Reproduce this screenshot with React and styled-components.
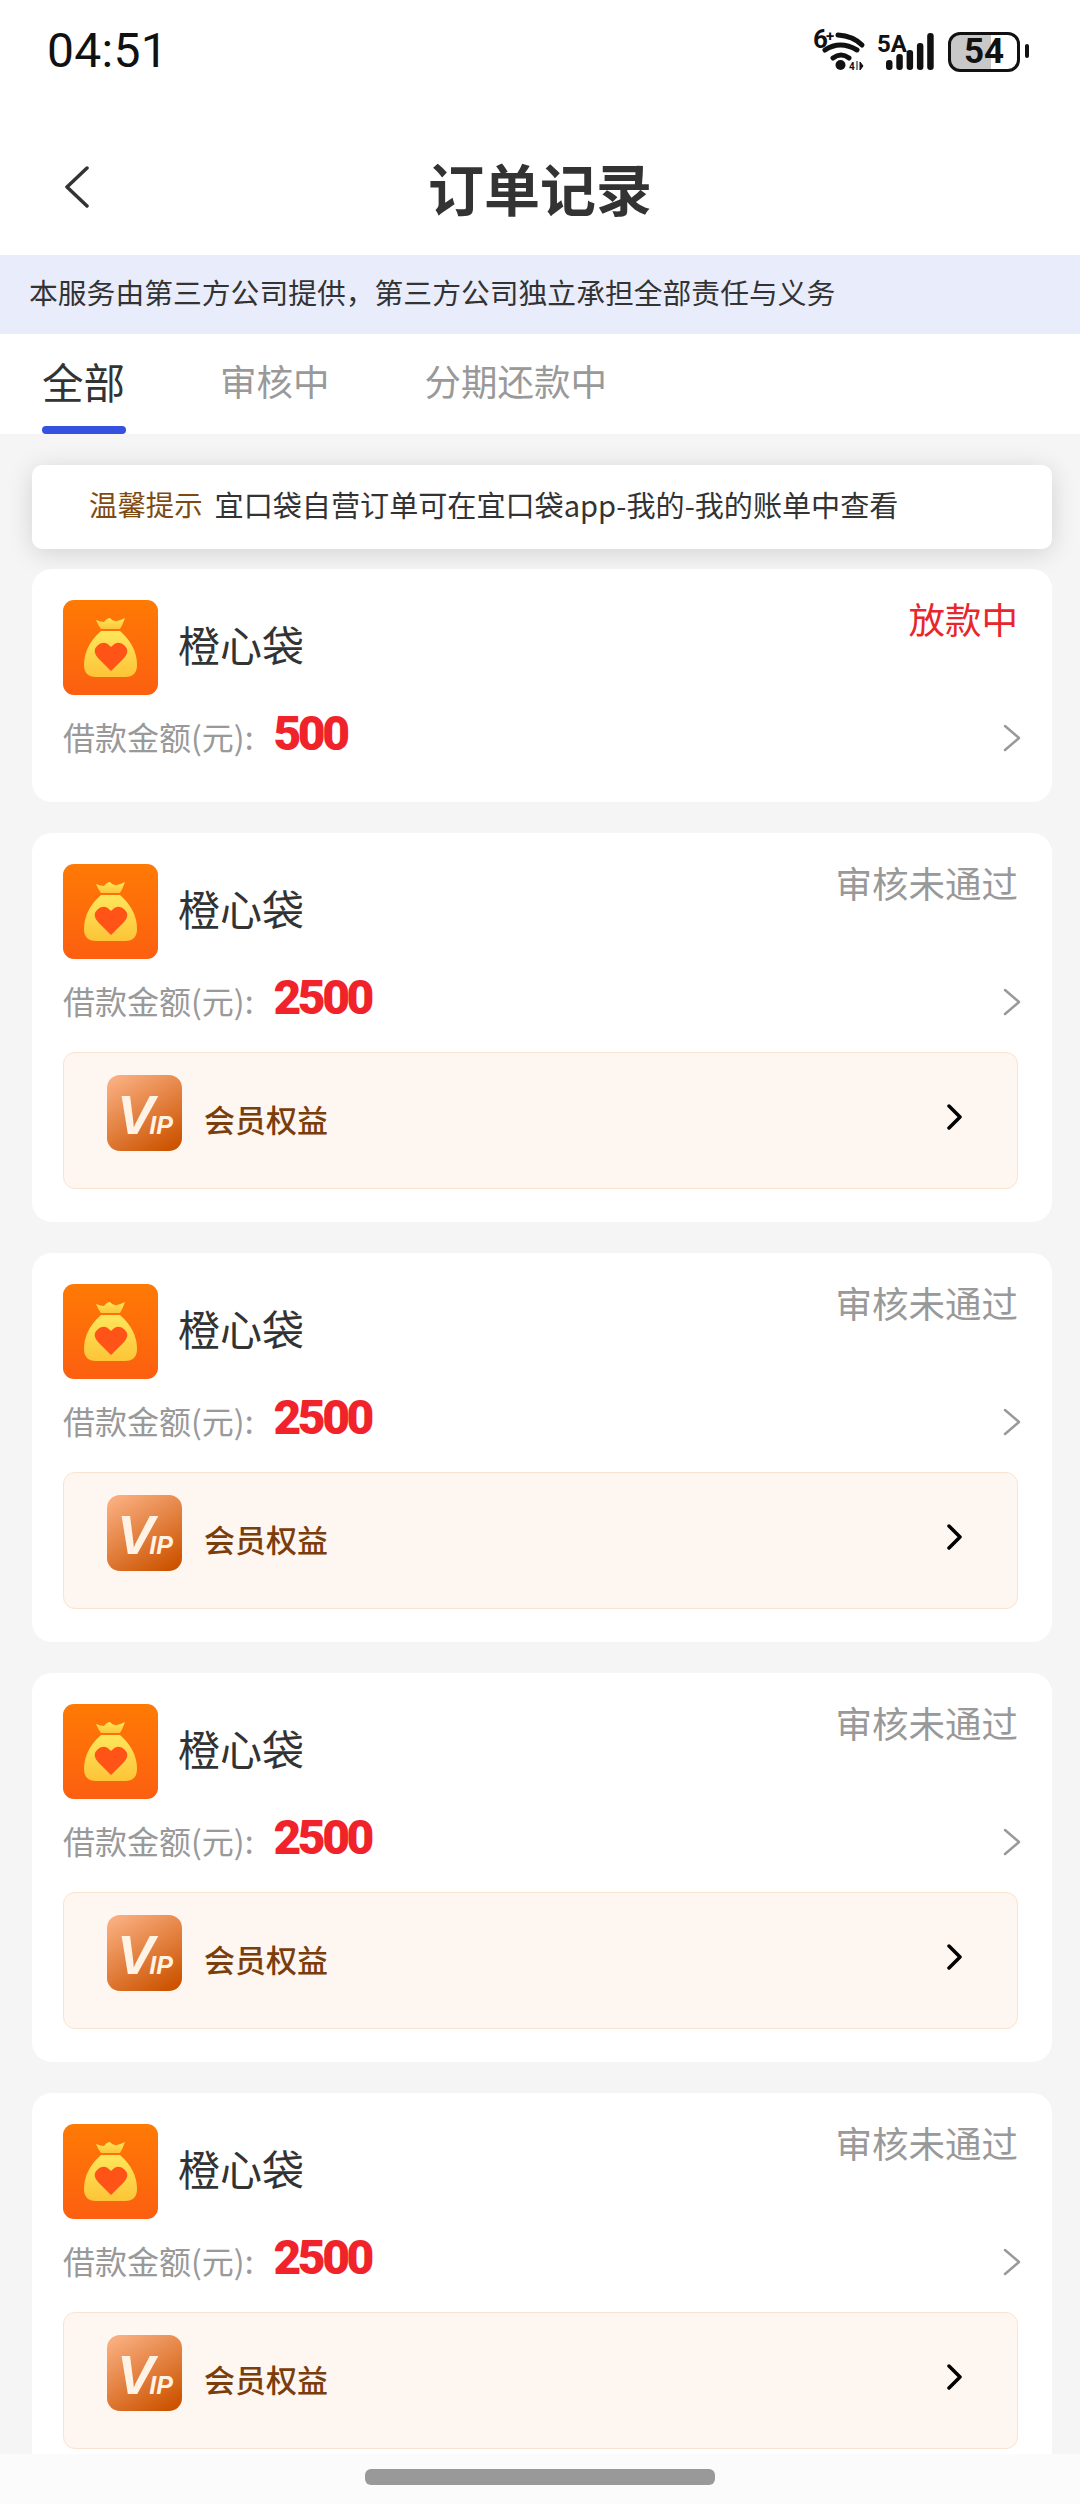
import styled, { createGlobalStyle } from 'styled-components';

const GlobalStyle = createGlobalStyle`
  html, body {
    margin: 0;
    padding: 0;
    background: #f5f5f5;
  }
  * {
    box-sizing: border-box;
  }
`;

const orders = [
  { id: 1, amount: '500', status: '放款中', active: true, vip: false },
  { id: 2, amount: '2500', status: '审核未通过', vip: true },
  { id: 3, amount: '2500', status: '审核未通过', vip: true },
  { id: 4, amount: '2500', status: '审核未通过', vip: true },
  { id: 5, amount: '2500', status: '审核未通过', vip: true },
];

function WifiIcon() {
  return (
    <StatusSvg width="55" height="50" viewBox="813 27 55 50">
      <StatusText x="813" y="48" fontSize="26">6</StatusText>
      <StatusText x="826" y="41" fontSize="15">+</StatusText>
      <g fill="none" stroke="#111" strokeWidth="5" strokeLinecap="round">
        <path d="M838 35 Q853 36 862 45" />
        <path d="M825 50 Q840 40 857 50" />
        <path d="M833 58 Q841 52 849 58" />
      </g>
      <circle cx="840.5" cy="65" r="5" fill="#111" />
      <StatusText x="849" y="70" fontSize="10">4</StatusText>
      <path d="M857 61v9M860 62l3 4h-3zM860 70l3-4h-3z" fill="#111" stroke="#111" strokeWidth="1" />
    </StatusSvg>
  );
}

function SignalIcon() {
  const bars = [60, 54, 50, 43, 33];
  return (
    <StatusSvg width="60" height="50" viewBox="878 27 60 50">
      <StatusText x="877" y="52" fontSize="24">5A</StatusText>
      {bars.map((top, i) => (
        <rect key={top} x={886 + i * 10.3} y={top} width="6.5" height={70 - top} rx="3" fill="#111" />
      ))}
    </StatusSvg>
  );
}

function BackIcon() {
  return (
    <svg width="25" height="42" viewBox="0 0 25 42" fill="none" stroke="#333" strokeWidth="3.5" strokeLinecap="round" strokeLinejoin="round">
      <path d="M23 2 L3 21 L23 40" />
    </svg>
  );
}

function BagLogo() {
  return (
    <LogoSvg viewBox="0 0 95 95">
      <defs>
        <linearGradient id="logoBg" x1="0" y1="0" x2="0" y2="1">
          <stop offset="0" stopColor="#ff7a05" />
          <stop offset="1" stopColor="#fc5f10" />
        </linearGradient>
        <linearGradient id="logoBag" x1="0" y1="0" x2="0" y2="1">
          <stop offset="0" stopColor="#ffe65c" />
          <stop offset="1" stopColor="#fdc437" />
        </linearGradient>
      </defs>
      <rect width="95" height="95" rx="11" fill="url(#logoBg)" />
      <path d="M33 20 Q38 22 41 22 Q44 18 47 18 Q50 22 54 21 Q58 20 62 18 Q60 24 57 29 L38 29 Q35 25 33 20 Z" fill="url(#logoBag)" />
      <path d="M38 31 L57 31 Q74 46 74 65 Q74 77 62 77 L33 77 Q21 77 21 65 Q21 46 38 31 Z" fill="url(#logoBag)" />
      <path d="M48 71 L35 58 Q29 51 34 46 Q41 39 48 47 Q55 39 62 46 Q67 51 61 58 Z" fill="#ff5317" />
    </LogoSvg>
  );
}

function VipBadge() {
  return (
    <BadgeSvg viewBox="0 0 75 76">
      <defs>
        <linearGradient id="vipBg" x1="0.2" y1="0" x2="0.8" y2="1">
          <stop offset="0" stopColor="#f9ad7e" />
          <stop offset="1" stopColor="#cc5300" />
        </linearGradient>
      </defs>
      <rect width="75" height="76" rx="13" fill="url(#vipBg)" />
      <BadgeText x="10" y="59" fontSize="56">
        V<tspan fontSize="25" dx="-5">IP</tspan>
      </BadgeText>
    </BadgeSvg>
  );
}

function OrderCard({ amount, status, active, vip }) {
  return (
    <Card>
      <CardHead>
        <Brand>
          <BagLogo />
          <BrandName>橙心袋</BrandName>
        </Brand>
        <Status $active={active}>{status}</Status>
      </CardHead>
      <AmountRow>
        <AmountLabel>借款金额(元):</AmountLabel>
        <Amount>{amount}</Amount>
        <RowArrow width="18" height="28" viewBox="0 0 18 28">
          <path d="M2 2 L16 14 L2 26" />
        </RowArrow>
      </AmountRow>
      {vip && (
        <VipBox>
          <VipBadge />
          <VipLabel>会员权益</VipLabel>
          <VipArrow width="16" height="26" viewBox="0 0 16 26">
            <path d="M2 2 L13 13 L2 24" />
          </VipArrow>
        </VipBox>
      )}
    </Card>
  );
}

export default function App() {
  return (
    <Page>
      <GlobalStyle />
      <StatusBar>
        <Time>04:51</Time>
        <StatusIcons>
          <WifiIcon />
          <SignalIcon />
          <Battery>54</Battery>
        </StatusIcons>
      </StatusBar>
      <NavBar>
        <BackIcon />
        <Title>订单记录</Title>
      </NavBar>
      <Notice>本服务由第三方公司提供，第三方公司独立承担全部责任与义务</Notice>
      <Tabs>
        <Tab $active>全部</Tab>
        <Tab>审核中</Tab>
        <Tab>分期还款中</Tab>
      </Tabs>
      <List>
        <Tip>
          <TipLabel>温馨提示</TipLabel>
          <TipText>宜口袋自营订单可在宜口袋app-我的-我的账单中查看</TipText>
        </Tip>
        <Cards>
          {orders.map((order) => (
            <OrderCard key={order.id} {...order} />
          ))}
        </Cards>
      </List>
      <HomeBar>
        <HomePill />
      </HomeBar>
    </Page>
  );
}

const Page = styled.div`
  position: relative;
  width: 1080px;
  height: 2504px;
  overflow: hidden;
  background: #f5f5f5;
  font-family: 'Noto Sans CJK SC', 'Noto Sans', sans-serif;
`;

const StatusBar = styled.div`
  display: flex;
  justify-content: space-between;
  align-items: center;
  height: 104px;
  padding: 0 52px 0 47px;
  background: #fff;
`;

const Time = styled.div`
  font-family: Roboto, sans-serif;
  font-size: 48px;
  font-weight: 450;
  color: #111;
  letter-spacing: 0.3px;
  margin-top: -4px;
`;

const StatusIcons = styled.div`
  display: flex;
  align-items: center;
  gap: 10px;
`;

const StatusSvg = styled.svg`
  display: block;
  overflow: visible;
`;

const StatusText = styled.text`
  font-family: Roboto, sans-serif;
  font-weight: 700;
  fill: #111;
`;

const Battery = styled.div`
  position: relative;
  width: 72px;
  height: 40px;
  margin-right: 8px;
  border: 3.5px solid #111;
  border-radius: 12px;
  background: linear-gradient(to right, #c8c8c8 60%, transparent 60%);
  font-family: Roboto, sans-serif;
  font-size: 35px;
  font-weight: 700;
  line-height: 33px;
  text-align: center;
  color: #111;

  &::after {
    content: '';
    position: absolute;
    top: 9px;
    right: -12px;
    width: 4px;
    height: 14px;
    border-radius: 2px;
    background: #111;
  }
`;

const NavBar = styled.div`
  position: relative;
  display: flex;
  align-items: center;
  justify-content: center;
  height: 151px;
  padding-top: 14px;
  background: #fff;

  svg {
    position: absolute;
    left: 64px;
    top: 62px;
  }
`;

const Title = styled.h1`
  margin: 0;
  font-size: 56px;
  font-weight: 700;
  color: #333;
`;

const Notice = styled.div`
  height: 79px;
  padding-left: 29px;
  background: #e9edfb;
  font-size: 28.8px;
  line-height: 74px;
  color: #333;
  white-space: nowrap;
`;

const Tabs = styled.div`
  display: flex;
  gap: 95px;
  height: 100px;
  padding-left: 42px;
  background: #fff;
`;

const Tab = styled.div`
  position: relative;
  font-size: ${(p) => (p.$active ? '41.5px' : '36.5px')};
  line-height: 94px;
  color: ${(p) => (p.$active ? '#333' : '#999')};

  ${(p) =>
    p.$active &&
    `
    &::after {
      content: '';
      position: absolute;
      left: 0;
      right: -1px;
      bottom: 0;
      height: 8px;
      border-radius: 4px;
      background: #3650e0;
    }
  `}
`;

const List = styled.div`
  padding: 31px 28px 0 32px;
`;

const Tip = styled.div`
  display: flex;
  gap: 12px;
  height: 84px;
  padding-left: 57px;
  margin-bottom: 20px;
  border-radius: 10px;
  background: #fff;
  box-shadow: 0 4px 26px rgba(0, 0, 0, 0.14);
  font-size: 28.4px;
  line-height: 78px;
  color: #333;
  white-space: nowrap;
`;

const TipLabel = styled.span`
  color: #7f4a12;
`;

const TipText = styled.span`
  font-size: 29.1px;
`;

const Cards = styled.div`
  display: flex;
  flex-direction: column;
  gap: 31px;
`;

const Card = styled.div`
  padding: 31px 34px 33px 31px;
  border-radius: 20px;
  background: #fff;
`;

const CardHead = styled.div`
  display: flex;
  justify-content: space-between;
  align-items: flex-start;
`;

const Brand = styled.div`
  display: flex;
  align-items: center;
  gap: 20px;
`;

const LogoSvg = styled.svg`
  display: block;
  width: 95px;
  height: 95px;
`;

const BrandName = styled.div`
  margin-top: -9px;
  font-size: 42px;
  color: #333;
`;

const Status = styled.div`
  font-size: 36.5px;
  line-height: 38px;
  color: ${(p) => (p.$active ? '#e8262b' : '#999')};
`;

const AmountRow = styled.div`
  display: flex;
  align-items: center;
  height: 57px;
  margin-top: 17px;
  padding-bottom: 7px;
`;

const AmountLabel = styled.div`
  margin-top: -2px;
  font-size: 32px;
  color: #999;
`;

const Amount = styled.div`
  margin-left: 20px;
  margin-top: -8px;
  font-family: Roboto, sans-serif;
  font-size: 48px;
  font-weight: 900;
  letter-spacing: -3.5px;
  color: #f0232b;
`;

const RowArrow = styled.svg`
  margin-left: auto;
  margin-right: -3px;
  margin-top: 2px;
  fill: none;
  stroke: #999;
  stroke-width: 2.5;
  stroke-linecap: round;
  stroke-linejoin: round;
`;

const VipBox = styled.div`
  display: flex;
  align-items: center;
  height: 137px;
  margin-top: 19px;
  padding: 0 54px 16px 43px;
  border: 1.5px solid #fae3cf;
  border-radius: 12px;
  background: #fef6f0;
`;

const BadgeSvg = styled.svg`
  display: block;
  width: 75px;
  height: 76px;
`;

const BadgeText = styled.text`
  font-family: 'Liberation Sans', sans-serif;
  font-weight: 700;
  font-style: italic;
  fill: #fff3e6;
`;

const VipLabel = styled.div`
  margin-left: 22px;
  margin-top: 11px;
  font-size: 31px;
  font-weight: 500;
  color: #7a3e0d;
`;

const VipArrow = styled.svg`
  margin-left: auto;
  margin-top: 8px;
  fill: none;
  stroke: #000;
  stroke-width: 3.5;
  stroke-linecap: round;
  stroke-linejoin: round;
`;

const HomeBar = styled.div`
  position: absolute;
  left: 0;
  right: 0;
  bottom: 0;
  display: flex;
  justify-content: center;
  height: 50px;
  padding-top: 15px;
  background: #fbfbfb;
`;

const HomePill = styled.div`
  width: 350px;
  height: 16px;
  border-radius: 6px;
  background: #999;
`;
